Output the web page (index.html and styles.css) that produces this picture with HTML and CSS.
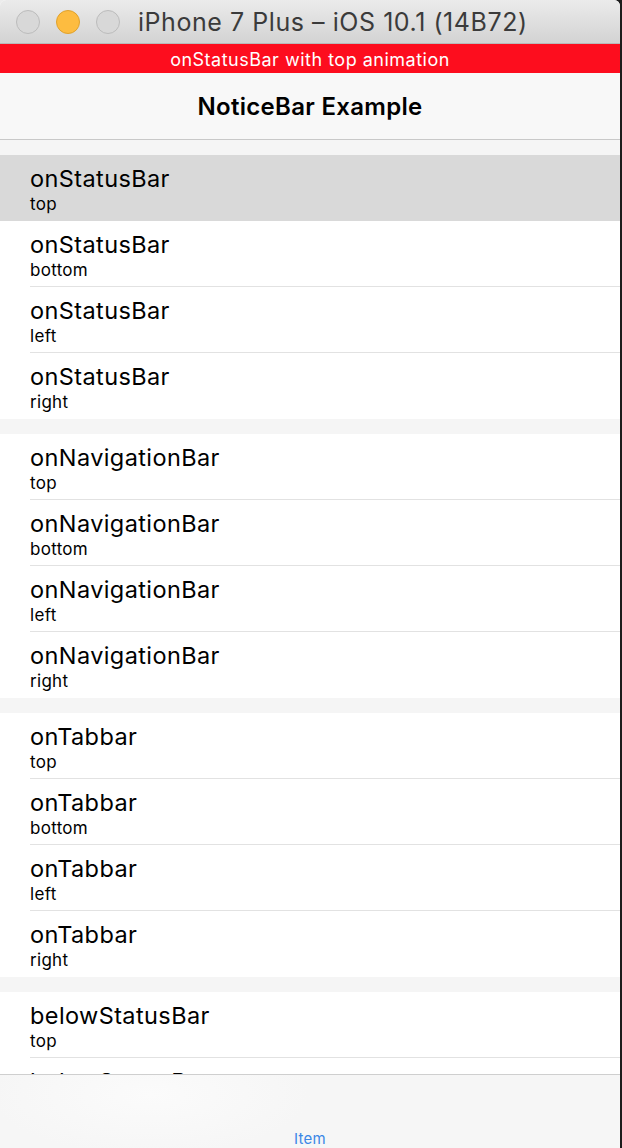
FILE: index.html
```html
<!DOCTYPE html>
<html>
<head>
<meta charset="utf-8">
<link rel="stylesheet" href="styles.css">
</head>
<body>
<div class="frame">
  <div class="window">
    <div class="titlebar">
      <div class="lights">
        <span class="light gray"></span>
        <span class="light yellow"></span>
        <span class="light gray"></span>
      </div>
      <div class="wtitle">iPhone 7 Plus – iOS 10.1 (14B72)</div>
    </div>
    <div class="screen">
      <div class="notice">onStatusBar with top animation</div>
      <div class="navbar">NoticeBar Example</div>
      <div class="list">
        <div class="gap"></div>
        <div class="section">
          <div class="row active"><div class="t">onStatusBar</div><div class="s">top</div></div>
          <div class="row"><div class="t">onStatusBar</div><div class="s">bottom</div></div>
          <div class="row"><div class="t">onStatusBar</div><div class="s">left</div></div>
          <div class="row"><div class="t">onStatusBar</div><div class="s">right</div></div>
        </div>
        <div class="gap"></div>
        <div class="section">
          <div class="row"><div class="t">onNavigationBar</div><div class="s">top</div></div>
          <div class="row"><div class="t">onNavigationBar</div><div class="s">bottom</div></div>
          <div class="row"><div class="t">onNavigationBar</div><div class="s">left</div></div>
          <div class="row"><div class="t">onNavigationBar</div><div class="s">right</div></div>
        </div>
        <div class="gap"></div>
        <div class="section">
          <div class="row"><div class="t">onTabbar</div><div class="s">top</div></div>
          <div class="row"><div class="t">onTabbar</div><div class="s">bottom</div></div>
          <div class="row"><div class="t">onTabbar</div><div class="s">left</div></div>
          <div class="row"><div class="t">onTabbar</div><div class="s">right</div></div>
        </div>
        <div class="gap"></div>
        <div class="section">
          <div class="row"><div class="t">belowStatusBar</div><div class="s">top</div></div>
          <div class="row"><div class="t">belowStatusBar</div><div class="s">bottom</div></div>
        </div>
      </div>
      <div class="tabbar"><span class="item">Item</span></div>
    </div>
  </div>
  <div class="edge"></div>
</div>
</body>
</html>
```
FILE: styles.css
```css
* { box-sizing: border-box; }
html, body {
  margin: 0;
  padding: 0;
  width: 622px;
  height: 1148px;
  overflow: hidden;
  background: linear-gradient(to right, #ececec 50%, #1c1c1c 50%);
  font-family: Inter, Roboto, "Liberation Sans", sans-serif;
}
.frame {
  display: flex;
  width: 622px;
  height: 1148px;
}
.window {
  width: 620px;
  height: 1148px;
  display: flex;
  flex-direction: column;
  border-radius: 6px 6px 0 0;
  overflow: hidden;
  background: #ffffff;
}
.edge {
  width: 2px;
  background: #1c1c1c;
}
.titlebar {
  height: 44px;
  flex: 0 0 44px;
  background: linear-gradient(to bottom, #ebebeb, #d3d3d3);
  display: flex;
  align-items: center;
  border-bottom: 1px solid #b9b9b9;
}
.lights {
  display: flex;
  gap: 16px;
  padding-left: 16px;
}
.light {
  width: 24px;
  height: 24px;
  border-radius: 50%;
  display: block;
}
.light.gray {
  background: #d8d8d8;
  border: 1px solid #bcbcbc;
}
.light.yellow {
  background: #fdbc40;
  border: 1px solid #e0a22c;
}
.wtitle {
  margin-left: 18px;
  font-size: 25px;
  color: #3b3b3b;
  letter-spacing: 0.55px;
  white-space: nowrap;
}
.screen {
  flex: 1;
  display: flex;
  flex-direction: column;
  overflow: hidden;
}
.notice {
  height: 29px;
  flex: 0 0 29px;
  background: #fd0d1e;
  color: #ffffff;
  font-size: 18px;
  letter-spacing: 0.5px;
  display: flex;
  align-items: center;
  justify-content: center;
  padding-top: 1px;
}
.navbar {
  height: 67px;
  flex: 0 0 67px;
  background: #f8f8f8;
  border-bottom: 1px solid #c9c9c9;
  display: flex;
  align-items: center;
  justify-content: center;
  font-size: 24px;
  font-weight: 600;
  letter-spacing: 0.3px;
  color: #000;
  padding-top: 1px;
}
.list {
  flex: 1;
  overflow: hidden;
  background: #f5f5f5;
}
.gap {
  height: 15px;
}
.section {
  background: #ffffff;
}
.row {
  height: 66px;
  padding-left: 30px;
  display: flex;
  flex-direction: column;
  justify-content: flex-start;
  position: relative;
  color: #000;
}
.row::after {
  content: "";
  position: absolute;
  left: 30px;
  right: 0;
  bottom: 0;
  height: 1px;
  background: #e2e2e2;
}
.row:last-child::after { display: none; }
.row.active { background: #d9d9d9; }
.row.active::after { display: none; }
.t {
  font-size: 23.5px;
  letter-spacing: 0.4px;
  line-height: 28px;
  margin-top: 10px;
  white-space: nowrap;
}
.s {
  font-size: 17px;
  letter-spacing: 0.3px;
  line-height: 20px;
  margin-top: 1px;
}
.tabbar {
  height: 74px;
  flex: 0 0 74px;
  background: radial-gradient(ellipse 160px 60px at 150px 20px, #fbfbfb, #f6f6f6 100%);
  border-top: 1px solid #cfcfcf;
  display: flex;
  align-items: flex-end;
  justify-content: center;
  padding-bottom: 0;
}
.item {
  font-size: 15px;
  letter-spacing: 0.3px;
  color: #3b87e6;
  line-height: 18px;
}
```
